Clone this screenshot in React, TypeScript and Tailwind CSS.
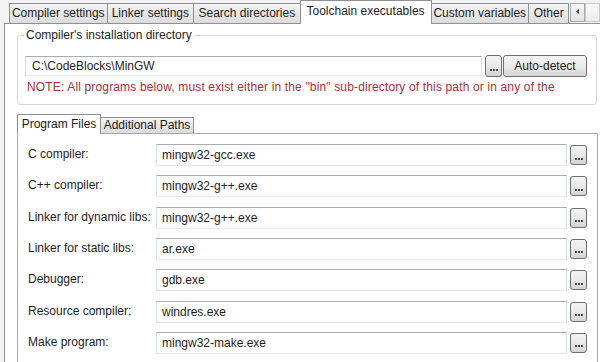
import React from "react";

const Dots = () => (
  <div className="flex gap-[1px] mt-[7px]">
    <span className="w-[2px] h-[2px] bg-[#4a4a4a]" />
    <span className="w-[2px] h-[2px] bg-[#4a4a4a]" />
    <span className="w-[2px] h-[2px] bg-[#4a4a4a]" />
  </div>
);

const DotButton = ({ h = "h-[20px]" }: { h?: string }) => (
  <button
    className={`w-[17px] ${h} shrink-0 rounded-[3px] border border-[#707070] bg-gradient-to-b from-[#f4f4f4] via-[#e8e8e8] to-[#d4d4d4] flex items-center justify-center`}
  >
    <Dots />
  </button>
);

const rows: [string, string][] = [
  ["C compiler:", "mingw32-gcc.exe"],
  ["C++ compiler:", "mingw32-g++.exe"],
  ["Linker for dynamic libs:", "mingw32-g++.exe"],
  ["Linker for static libs:", "ar.exe"],
  ["Debugger:", "gdb.exe"],
  ["Resource compiler:", "windres.exe"],
  ["Make program:", "mingw32-make.exe"],
];

const tabBase =
  "h-[20px] border border-b-0 border-[#8e9096] bg-gradient-to-b from-[#f3f3f3] to-[#dcdcdc] text-center leading-[19px] -ml-px";

export default function App() {
  return (
    <div className="w-[600px] h-[362px] overflow-hidden bg-[#f3f3f3] text-[12px] text-[#1e1e1e] font-['Liberation_Sans',Arial,sans-serif]">
      {/* top tabs */}
      <div className="relative z-10 flex items-end h-[23px] pl-[10px]">
        <div className={`${tabBase} w-[100px]`}>Compiler settings</div>
        <div className={`${tabBase} w-[89px]`}>Linker settings</div>
        <div className={`${tabBase} w-[109px]`}>Search directories</div>
        <div className="-ml-px -mb-px h-[24px] w-[134px] border border-b-0 border-[#8e9096] bg-white text-center leading-[21px]">
          Toolchain executables
        </div>
        <div className={`${tabBase} w-[100px]`}>Custom variables</div>
        <div className={`${tabBase} w-[42px]`}>Other</div>
        <div className="ml-[1px] mb-[1px] h-[19px] w-[15px] border border-[#a8a8a8] bg-gradient-to-b from-[#f6f6f6] to-[#e2e2e2] flex justify-center pt-[5px]">
          <svg width="4" height="5" viewBox="0 0 4 5">
            <path d="M3 0 L0 2.5 L3 5 Z" fill="#444" />
          </svg>
        </div>
        <div className="mb-[1px] h-[19px] w-[15px] border border-[#c8c8c8] bg-gradient-to-b from-[#fafafa] to-[#ececec]" />
      </div>

      {/* outer panel */}
      <div className="ml-[4px] w-[620px] h-[360px] border border-[#8e9096] bg-white pl-[12px]">
        {/* group box */}
        <div className="relative mt-[11px] w-[580px] h-[70px] rounded-[3px] border border-[#d5d9dd]">
          <span className="absolute left-[6px] -top-[8px] bg-white px-[2px] leading-[14px]">
            Compiler's installation directory
          </span>
          <div className="flex items-center h-[22px] mt-[19px] ml-[7px]">
            <div className="w-[457px] h-[20px] border border-t-[#abadb3] border-x-[#dbdfe6] border-b-[#e3e9ef] pl-[6px] leading-[18px]">
              C:\CodeBlocks\MinGW
            </div>
            <button className="ml-[3px] w-[17px] h-[22px] rounded-[3px] border border-[#707070] bg-gradient-to-b from-[#f4f4f4] via-[#e8e8e8] to-[#d4d4d4] flex items-center justify-center">
              <Dots />
            </button>
            <button className="ml-[1px] w-[84px] h-[22px] rounded-[3px] border border-[#707070] bg-gradient-to-b from-[#f4f4f4] via-[#ebebeb] to-[#d6d6d6] text-center leading-[20px]">
              Auto-detect
            </button>
          </div>
          <div className="mt-[3px] ml-[9px] leading-[14px] text-[#a8323a] whitespace-nowrap tracking-[0.15px]">
            NOTE: All programs below, must exist either in the "bin" sub-directory of this path or in any of the
          </div>
        </div>

        {/* inner notebook */}
        <div className="relative z-10 flex items-end h-[19px] mt-[9px]">
          <div className="-mb-px h-[20px] w-[84px] border border-b-0 border-[#8e9096] bg-white text-center leading-[19px]">
            Program Files
          </div>
          <div className="-ml-px h-[16px] w-[94px] border border-b-0 border-[#8e9096] bg-gradient-to-b from-[#f3f3f3] to-[#dcdcdc] text-center leading-[15px]">
            Additional Paths
          </div>
        </div>
        <div className="w-[581px] h-[260px] border border-[#a7a9ae] bg-white pt-[10px] pl-[10px] flex flex-col gap-[9.33px]">
          {rows.map(([label, value]) => (
            <div key={label} className="flex items-center h-[22px]">
              <div className="w-[128px] shrink-0 whitespace-nowrap leading-[14px] -mt-[2px]">{label}</div>
              <div className="w-[411px] h-[22px] border border-t-[#abadb3] border-x-[#dbdfe6] border-b-[#e3e9ef] pl-[5px] leading-[20px]">
                {value}
              </div>
              <div className="ml-[3px]">
                <DotButton />
              </div>
            </div>
          ))}
        </div>
      </div>
    </div>
  );
}
